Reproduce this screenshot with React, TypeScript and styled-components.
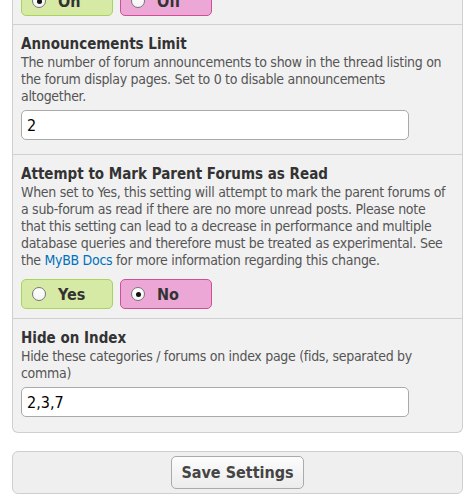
import styled, { createGlobalStyle } from 'styled-components';

const GlobalStyle = createGlobalStyle`
  body {
    margin: 0;
    background: #fff;
    font-family: "DejaVu Sans Condensed", "DejaVu Sans", sans-serif;
    color: #333;
    overflow: hidden;
  }
`;

type Choice = { label: string; tone: 'yes' | 'no'; checked: boolean };

const App = () => {
  return (
    <Page>
      <GlobalStyle />
      <Panel>
        <CutRow>
          <RadioChoices
            items={[
              { label: 'On', tone: 'yes', checked: true },
              { label: 'Off', tone: 'no', checked: false },
            ]}
          />
        </CutRow>
        <Row>
          <Title>Announcements Limit</Title>
          <Desc>
            The number of forum announcements to show in the thread listing on the forum display pages. Set
            to 0 to disable announcements altogether.
          </Desc>
          <TextInput defaultValue="2" />
        </Row>
        <Row>
          <Title>Attempt to Mark Parent Forums as Read</Title>
          <Desc>
            When set to Yes, this setting will attempt to mark the parent forums of a sub-forum as read if
            there are no more unread posts. Please note that this setting can lead to a decrease in
            performance and multiple database queries and therefore must be treated as experimental. See
            the <DocLink href="#">MyBB Docs</DocLink> for more information regarding this change.
          </Desc>
          <RadioChoices
            spaced
            items={[
              { label: 'Yes', tone: 'yes', checked: false },
              { label: 'No', tone: 'no', checked: true },
            ]}
          />
        </Row>
        <Row $last>
          <Title>Hide on Index</Title>
          <Desc>Hide these categories / forums on index page (fids, separated by comma)</Desc>
          <TextInput defaultValue="2,3,7" />
        </Row>
      </Panel>
      <ButtonBar>
        <SaveButton type="button">Save Settings</SaveButton>
      </ButtonBar>
    </Page>
  );
};

const RadioChoices = ({ items, spaced }: { items: Choice[]; spaced?: boolean }) => (
  <RadioGroup $spaced={spaced}>
    {items.map((item) => (
      <RadioLabel key={item.label} $tone={item.tone}>
        <RadioDot $checked={item.checked} />
        <span>{item.label}</span>
      </RadioLabel>
    ))}
  </RadioGroup>
);

export default App;

const Page = styled.div`
  display: flow-root;
  padding: 0 11px 0 12px;
`;

const Panel = styled.div`
  display: flow-root;
  margin-top: -14px;
  background: #f1f1f1;
  border: 1px solid #cfcfcf;
  border-top: none;
  border-radius: 0 0 6px 6px;
`;

const CutRow = styled.div`
  padding: 0 8px 8px;
  border-bottom: 1px solid #d0d0d0;
`;

const Row = styled.div<{ $last?: boolean }>`
  padding: 9px 9px ${(p) => (p.$last ? '15px' : '14px')} 8px;
  border-bottom: ${(p) => (p.$last ? 'none' : '1px solid #d0d0d0')};
`;

const Title = styled.div`
  font-size: 15px;
  line-height: 20px;
  font-weight: bold;
  color: #333;
`;

const Desc = styled.div`
  font-size: 14px;
  line-height: 17px;
  letter-spacing: -0.3px;
  color: #555;
`;

const DocLink = styled.a`
  color: #0072bc;
  text-decoration: none;
`;

const TextInput = styled.input`
  display: block;
  box-sizing: border-box;
  margin-top: 5px;
  width: 388px;
  height: 30px;
  padding: 0 5px;
  border: 1px solid #aaa;
  border-radius: 5px;
  background: #fff;
  font-family: "DejaVu Sans Condensed", "DejaVu Sans", sans-serif;
  font-size: 16px;
  color: #000;
  outline: none;
`;

const RadioGroup = styled.div<{ $spaced?: boolean }>`
  display: flex;
  gap: 7px;
  margin: ${(p) => (p.$spaced ? '10px 0 -5px' : '0')};
`;

const RadioLabel = styled.label<{ $tone: 'yes' | 'no' }>`
  box-sizing: border-box;
  display: flex;
  align-items: center;
  gap: 12px;
  width: 92px;
  height: 30px;
  padding-left: 10px;
  border-radius: 5px;
  border: 1px solid ${(p) => (p.$tone === 'yes' ? '#a6d45f' : '#cf4f95')};
  background: ${(p) => (p.$tone === 'yes' ? '#d6eaa6' : '#eca7d6')};
  font-size: 16px;
  font-weight: bold;
  color: #333;
`;

const RadioDot = styled.span<{ $checked: boolean }>`
  position: relative;
  box-sizing: border-box;
  width: 14px;
  height: 14px;
  border-radius: 50%;
  border: 1px solid #777;
  background: linear-gradient(#fff, #f4f4f4);
  flex: none;

  &::after {
    content: '';
    display: ${(p) => (p.$checked ? 'block' : 'none')};
    position: absolute;
    left: 3.5px;
    top: 3.5px;
    width: 5px;
    height: 5px;
    border-radius: 50%;
    background: #111;
  }
`;

const ButtonBar = styled.div`
  margin-top: 18px;
  padding: 4px 0;
  display: flex;
  justify-content: center;
  background: #efefef;
  border: 1px solid #cfcfcf;
  border-radius: 6px;
`;

const SaveButton = styled.button`
  box-sizing: border-box;
  height: 33px;
  padding: 0 9px;
  border: 1px solid #aaa;
  border-radius: 5px;
  background: linear-gradient(#fcfcfc, #ececec);
  font-family: "DejaVu Sans Condensed", "DejaVu Sans", sans-serif;
  font-size: 16px;
  font-weight: bold;
  color: #444;
`;
